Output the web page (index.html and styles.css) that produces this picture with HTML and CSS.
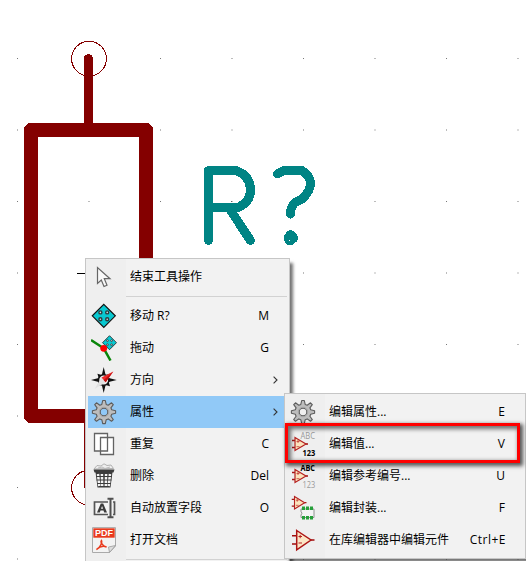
FILE: index.html
```html
<!DOCTYPE html>
<html lang="zh-CN">
<head>
<meta charset="utf-8">
<title>原理图</title>
<link rel="stylesheet" href="styles.css">
</head>
<body>
<svg width="0" height="0" class="defs">
  <defs>
    <pattern id="grid" x="17" y="58" width="71.5" height="71.5" patternUnits="userSpaceOnUse"><rect width="1" height="1" fill="#777"/></pattern>
    <g id="move">
      <path d="M0-11.5 11.5 0 0 11.5-11.5 0Z" fill="#08c8d0" stroke="#111" stroke-width="1.2"/>
      <g fill="#ddd" stroke="#2c3c3e" stroke-width="1.4"><circle cx="-3.400" cy="-3.400" r="1.500"/><circle cx="3.400" cy="-3.400" r="1.500"/><circle cx="-3.400" cy="3.400" r="1.500"/><circle cx="3.400" cy="3.400" r="1.500"/></g>
    </g>
    <g id="gear">
      <path fill="#bdbdbd" stroke="#5c5c5c" stroke-width="1.1" stroke-linejoin="round" fill-rule="evenodd" d="M-1.300-11.500H1.300L2.200-7.600 4.200-6.800 7.500-9.200 9.300-7.400 6.900-4.200 7.700-2.200 11.600-1.300V1.300L7.700 2.200 6.900 4.200 9.300 7.500 7.500 9.300 4.200 6.900 2.200 7.700 1.300 11.600H-1.300L-2.200 7.700-4.200 6.900-7.500 9.300-9.300 7.500-6.900 4.200-7.700 2.200-11.600 1.300V-1.300L-7.700-2.200-6.900-4.200-9.300-7.400-7.500-9.200-4.200-6.800-2.200-7.600ZM-3.800 0A3.800 3.800 0 1 0 3.800 0A3.800 3.800 0 1 0-3.800 0Z"/>
      <circle r="4.700" fill="none" stroke="#a3a3a3"/>
    </g>
    <g id="amp">
      <path d="M-3 -3.500H0M-3 3.500H0M10.500 0H13" stroke="#a31515" stroke-width="1.300"/>
      <path d="M0-6.500 11 0 0 6.500Z" fill="#fbe3bd" stroke="#b52020" stroke-width="1.200"/>
      <path d="M1.500-2.500H4.500M3-4V-1M1.500 2.700H4.500" stroke="#c23a32" stroke-width=".8"/>
    </g>
  </defs>
</svg>

<svg class="sheet" viewBox="0 0 526 561">
  <rect width="526" height="561" fill="url(#grid)"/>
  <g shape-rendering="crispEdges" fill="none" stroke="#840000">
    <circle cx="89" cy="58.700" r="17.400"/>
    <circle cx="89" cy="487.700" r="17.400"/>
    <path d="M88.500 58.500V130" stroke-width="9" stroke-linecap="round"/>
    <path d="M31 130H146V416H31Z" stroke-width="14" stroke-linejoin="round"/>
    <path d="M84.500 423V488"/>
  </g>
  <path d="M77 273.500H86" stroke="#000"/>
  <g fill="none" stroke="#008484" stroke-width="9" stroke-linecap="round" stroke-linejoin="round" shape-rendering="crispEdges">
    <path d="M208.500 240.500V170.500H236Q250.500 176 250.500 190Q250.500 202 238 207.500H208.500M229 208 250.500 240.500"/>
    <path d="M277.500 174 284 170.500H302Q310.500 176 310.500 183.500Q310.500 191 302 199L294.500 203Q290.500 207 290.500 214"/>
    <path d="M290.500 234.500 293.700 238 291 240.500H289.500L288 238Z"/>
  </g>
  <path d="M231 201h1v1h-1Z" fill="#666"/>
</svg>

<ul class="menu menu-main">
  <li class="item">
    <svg class="icon" viewBox="0 0 26 26"><path d="M6.500 3.500V19.500L10.300 16 13 22.500 16 21.200 13.300 14.700H19Z" fill="#f8f8f8" stroke="#666" stroke-width="1.200"/></svg>
    <span class="label">结束工具操作</span>
  </li>
  <li class="separator"></li>
  <li class="item">
    <svg class="icon" viewBox="0 0 26 26"><use href="#move" x="12.800" y="12.800"/></svg>
    <span class="label">移动 R?</span><span class="key">M</span>
  </li>
  <li class="item">
    <svg class="icon" viewBox="0 0 26 26"><use href="#move" transform="translate(18.500 7.700) scale(.61)"/><path d="M0 5 12.700 13.300 19.500 25.500" fill="none" stroke="#0a860a" stroke-width="2.500"/><circle cx="12.700" cy="13.300" r="3.400" fill="#f00"/></svg>
    <span class="label">拖动</span><span class="key">G</span>
  </li>
  <li class="item">
    <svg class="icon" viewBox="0 0 26 26"><path d="M12.700 0 14.600 8 19 6.700 17.700 11.100 25.700 13 17.700 14.900 19 19.300 14.600 18 12.700 26 10.800 18 6.400 19.300 7.700 14.900 0 13 7.700 11.100 6.400 6.700 10.800 8Z" fill="#111"/><circle cx="12.700" cy="13" r="5.200" fill="#f0f0f0" stroke="#111" stroke-width="1.500"/><path d="M10.500 10.500 3.500 22 14.700 15.200Z" fill="#e2e2e2"/><path d="M22.300 4.500 10.500 10.500 14.700 15.200Z" fill="#f02a2a"/><path d="M22.300 4.500 12.700 13 14.700 15.200Z" fill="#c01010"/></svg>
    <span class="label">方向</span><svg class="arrow" viewBox="0 0 5 8"><path d="M.6.700 4 4 .6 7.300"/></svg>
  </li>
  <li class="item selected">
    <svg class="icon" viewBox="0 0 26 26"><use href="#gear" x="13" y="13"/></svg>
    <span class="label">属性</span><svg class="arrow" viewBox="0 0 5 8"><path d="M.6.700 4 4 .6 7.300"/></svg>
  </li>
  <li class="item">
    <svg class="icon" viewBox="0 0 26 26"><path d="M3.500 2.500H16.500V20H3.500ZM9.500 6.500H22.500V23.500H9.500Z" fill="#fff" stroke="#636363" stroke-width="1.300"/></svg>
    <span class="label">重复</span><span class="key">C</span>
  </li>
  <li class="item">
    <svg class="icon" viewBox="0 0 26 26"><path d="M3 6 6 2.500 10 3 13 .8 16 2.500 20 2 22.500 5.500Z" fill="#eee" stroke="#aaa" stroke-width=".9"/><path d="M7 5 11 4 14 5.500 19 4" fill="none" stroke="#bbb"/><path d="M2.500 6.500H23.500L22.500 9.500H3.500Z" fill="#3c3c3c"/><path d="M4.500 9H21.500L19.500 24.500H6.500Z" fill="#3c3c3c"/><path d="M7 11 8.300 23M10.900 11 11.200 23M15.100 11 14.800 23M19 11 17.700 23" stroke="#f4f4f4" stroke-width="2.500"/><path d="M5 13.500H21M5.500 17H20.500M6 20.500H20" stroke="#3c3c3c" stroke-width="1"/></svg>
    <span class="label">删除</span><span class="key">Del</span>
  </li>
  <li class="item">
    <svg class="icon" viewBox="0 0 26 26"><path d="M3.500 7H23.500V19.500H3.500Z" fill="#f4f4f4" stroke="#555" stroke-width="1.700"/><path d="M6 17.500 9.800 8.500H12.200L16 17.500H13.200L12.500 15.500H9.500L8.800 17.500ZM10 13.700H12.100L11.050 10.900Z" fill="#3c3c3c" fill-rule="evenodd"/><path d="M19.500 4V22.500" stroke="#f0f0f0" stroke-width="5"/><path d="M16.500 3.800H22.500M19.500 4V22.500M16.500 22.300H22.500" stroke="#505050" stroke-width="2"/></svg>
    <span class="label">自动放置字段</span><span class="key">O</span>
  </li>
  <li class="item">
    <svg class="icon" viewBox="0 0 26 26"><path d="M1.500.6H24.500V19L18.500 25.500H1.500Z" fill="#f3f3f3" stroke="#aaa"/><path d="M2.300 1.300H23.700V10.700H2.300Z" fill="#e93a1d"/><text x="13" y="9" class="pdf">PDF</text><path d="M5.500 22.500C9.500 20.500 11.500 15 10.500 13.500 9 15 12 19.500 15.500 20 12 18.200 8.500 19.700 5.500 22.500Z" fill="none" stroke="#e93a1d" stroke-width="1.500"/><path d="M24.500 18.500 17.500 20 18.500 25.500Z" fill="#ddd" stroke="#999" stroke-width=".8"/></svg>
    <span class="label">打开文档</span>
  </li>
  <li class="separator"></li>
</ul>

<ul class="menu menu-sub">
  <li class="item">
    <svg class="icon" viewBox="0 0 26 26"><use href="#gear" x="13" y="13"/></svg>
    <span class="label">编辑属性...</span><span class="key">E</span>
  </li>
  <li class="item">
    <svg class="icon" viewBox="0 0 26 26"><use href="#amp" x="5" y="13"/><text x="10.500" y="7.800" textLength="14.500" lengthAdjust="spacingAndGlyphs" class="tag faint">ABC</text><text x="12.500" y="25" textLength="12.700" lengthAdjust="spacingAndGlyphs" class="tag">123</text></svg>
    <span class="label">编辑值...</span><span class="key">V</span>
  </li>
  <li class="item">
    <svg class="icon" viewBox="0 0 26 26"><use href="#amp" x="5" y="13"/><text x="10.500" y="7.500" textLength="14.500" lengthAdjust="spacingAndGlyphs" class="tag">ABC</text><text x="12.500" y="25" textLength="12.700" lengthAdjust="spacingAndGlyphs" class="tag faint">123</text></svg>
    <span class="label">编辑参考编号...</span><span class="key">U</span>
  </li>
  <li class="item">
    <svg class="icon" viewBox="0 0 26 26"><use href="#amp" transform="translate(4.500 7.700) scale(.92 .97)"/><path d="M11 14H24V22.500H11V20Q13 18.200 11 16.500Z" fill="#f4f4f4" stroke="#888" stroke-width=".9"/><path d="M12 11.500h3v3.500h-3ZM16 11.500h3v3.500h-3ZM20 11.500h3v3.500h-3ZM12 21h3v3.500h-3ZM16 21h3v3.500h-3ZM20 21h3v3.500h-3Z" fill="#26a03a"/></svg>
    <span class="label">编辑封装...</span><span class="key">F</span>
  </li>
  <li class="item">
    <svg class="icon" viewBox="0 0 26 26"><path d="M2 8.700H6.500M2 17H6.500M20.500 13H24.500" stroke="#a00c0c" stroke-width="1.500"/><path d="M6.700 3.500 21 13 6.700 22.800Z" fill="#fbe6c6" stroke="#ad1515" stroke-width="1.500"/><path d="M8.500 9.500H12M10.200 7.800V11.200M8.500 16H12" stroke="#b52020"/></svg>
    <span class="label">在库编辑器中编辑元件</span><span class="key key-combo">Ctrl+E</span>
  </li>
</ul>
<div class="highlight"></div>
</body>
</html>
```
FILE: styles.css
```css
* { box-sizing: border-box; }

body {
  position: relative;
  width: 526px;
  height: 561px;
  margin: 0;
  overflow: hidden;
  background: #fff;
  color: #000;
  font: 12px/32px "Open Sans", "Noto Sans CJK SC", sans-serif;
}

.defs { position: absolute; }

.sheet {
  display: block;
  width: 526px;
  height: 561px;
}

.menu {
  position: absolute;
  margin: 0;
  padding: 2px;
  list-style: none;
  border: 1px solid #c6c6c6;
  background: linear-gradient(90deg, #efefef 40px, #f2f2f2 40px);
  box-shadow: 4px 4px 3px -1px rgba(0, 0, 0, .55);
}

.menu-main {
  top: 258px;
  left: 85px;
  width: 205px;
}

.menu-sub {
  top: 393px;
  left: 284px;
  width: 242px;
  height: 166px;
}

.item {
  display: flex;
  align-items: center;
  height: 32px;
  padding-left: 3px;
}

.selected { background: #91c9f7; }

.icon {
  flex: none;
  width: 26px;
  height: 26px;
  margin-right: 13px;
}

.label {
  flex: 1;
  white-space: nowrap;
}

.key { margin-right: 18px; }

.key-combo {
  margin-right: 17px;
  letter-spacing: .5px;
}

.arrow {
  width: 5px;
  height: 8px;
  margin-right: 9px;
  fill: none;
  stroke: #333;
  stroke-width: 1.1;
}

.separator {
  height: 7px;
  margin-left: 38px;
  padding-top: 3px;
}

.separator::before {
  content: "";
  display: block;
  height: 1px;
  background: #d2d2d2;
}

.tag {
  font: 700 8.5px "Open Sans", sans-serif;
  fill: #000;
}

.faint {
  font-weight: 400;
  fill: #999;
}

.pdf {
  font: 700 9px "Liberation Sans", sans-serif;
  fill: #fff;
  text-anchor: middle;
}

.highlight {
  position: absolute;
  top: 423px;
  left: 285px;
  width: 235px;
  height: 40px;
  border: 3px solid #f00;
  box-shadow: 2px 2px 4px 1px rgba(0, 0, 0, .65), inset 2px 2px 4px 1px rgba(0, 0, 0, .55);
}
```
